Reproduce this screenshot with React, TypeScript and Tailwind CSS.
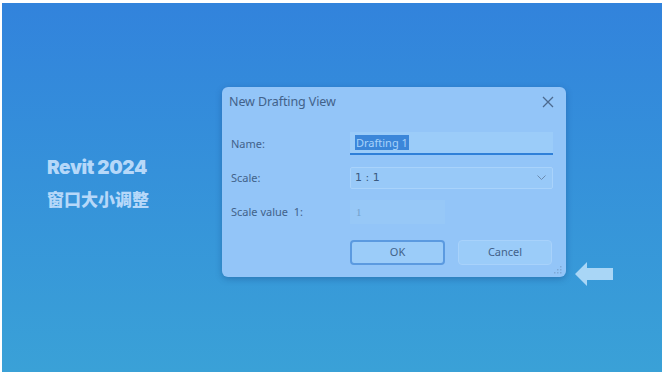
import React from "react";

const ResizeGrip = () => (
  <svg width="8" height="8" viewBox="0 0 8 8" className="absolute right-[4px] bottom-[3px]">
    <g fill="#7fa9d6">
      <rect x="6" y="0" width="1.5" height="1.5" />
      <rect x="3" y="3" width="1.5" height="1.5" />
      <rect x="6" y="3" width="1.5" height="1.5" />
      <rect x="0" y="6" width="1.5" height="1.5" />
      <rect x="3" y="6" width="1.5" height="1.5" />
      <rect x="6" y="6" width="1.5" height="1.5" />
    </g>
  </svg>
);

const App = () => {
  return (
    <div className="w-[665px] h-[375px] bg-white pt-[3px] pl-[2px] pr-[3px] pb-[3px] font-['Noto_Sans','Noto_Sans_CJK_SC',sans-serif]">
      <div className="w-full h-full bg-gradient-to-b from-[#3283dc] to-[#3aa1d7] flex items-start pt-[84px] pl-[45px]">
        <div className="w-[175px] mt-[69px] text-[#b6d8f9]">
          <div className="text-[19px] leading-[24px] font-black tracking-[-0.4px] font-['Inter','Noto_Sans_CJK_SC',sans-serif]">
            Revit 2024
          </div>
          <div className="mt-[8px] text-[17px] leading-[21px] font-black font-['Noto_Sans_CJK_SC',sans-serif]">
            窗口大小调整
          </div>
        </div>

        <div className="relative w-[344px] h-[190px] bg-[#93c5f8] rounded-[6px] shadow-[0_2px_6px_rgba(20,60,120,0.35)] flex flex-col text-[#42628a]">
          <div className="h-[30px] flex items-center justify-between pl-[7px] pr-[12px]">
            <span className="text-[12.5px] tracking-[-0.1px]">New Drafting View</span>
            <svg width="12" height="12" viewBox="0 0 12 12" stroke="#4d6a8f" strokeWidth="1.3" fill="none">
              <path d="M1 1 L11 11 M11 1 L1 11" />
            </svg>
          </div>

          <div className="mt-[15px] flex items-center pl-[9px] pr-[13px]">
            <span className="w-[119px] text-[11px] pt-[1px]">Name:</span>
            <div className="flex-1 h-[23px] bg-[#9bccf9] border-b-2 border-[#2f80d9] flex items-center pl-[5px]">
              <span className="bg-[#3b86d9] text-[#a8d2fb] text-[11px] leading-[15px] px-[1px]">Drafting 1</span>
            </div>
          </div>

          <div className="mt-[12px] flex items-center pl-[9px] pr-[13px]">
            <span className="w-[119px] text-[11px]">Scale:</span>
            <div className="flex-1 h-[22px] bg-[#98c9f8] border border-[#a9d3fb] rounded-[2px] flex items-center justify-between pl-[4px] pr-[6px]">
              <span className="text-[11px] text-[#3a5a80] font-['DejaVu_Sans',sans-serif]">1 : 1</span>
              <svg width="9" height="6" viewBox="0 0 9 6" fill="none" stroke="#6b8bb0" strokeWidth="1">
                <path d="M0.5 0.5 L4.5 4.5 L8.5 0.5" />
              </svg>
            </div>
          </div>

          <div className="mt-[11px] flex items-center pl-[9px] pr-[13px]">
            <span className="w-[119px] text-[11px]">Scale value&nbsp; 1:</span>
            <div className="w-[95px] h-[24px] bg-[#97c8f7] flex items-center pl-[6px]">
              <span className="text-[11px] text-[#73a0cc] font-['Liberation_Serif',serif]">1</span>
            </div>
          </div>

          <div className="mt-[16px] flex items-center justify-end gap-[13px] pr-[14px]">
            <div className="w-[95px] h-[25px] rounded-[4px] border-2 border-[#5b9ae0] bg-[#9bccf9] flex items-center justify-center text-[11px]">
              OK
            </div>
            <div className="w-[94px] h-[25px] rounded-[4px] border border-[#a8d2fb] bg-[#9bccf9] flex items-center justify-center text-[11px]">
              Cancel
            </div>
          </div>

          <ResizeGrip />
        </div>

        <svg width="38" height="24" viewBox="0 0 38 24" className="ml-[9px] mt-[175px]">
          <path d="M0 12 L12 0 L12 6 L38 6 L38 18 L12 18 L12 24 Z" fill="#a9d6f6" />
        </svg>
      </div>
    </div>
  );
};

export default App;
